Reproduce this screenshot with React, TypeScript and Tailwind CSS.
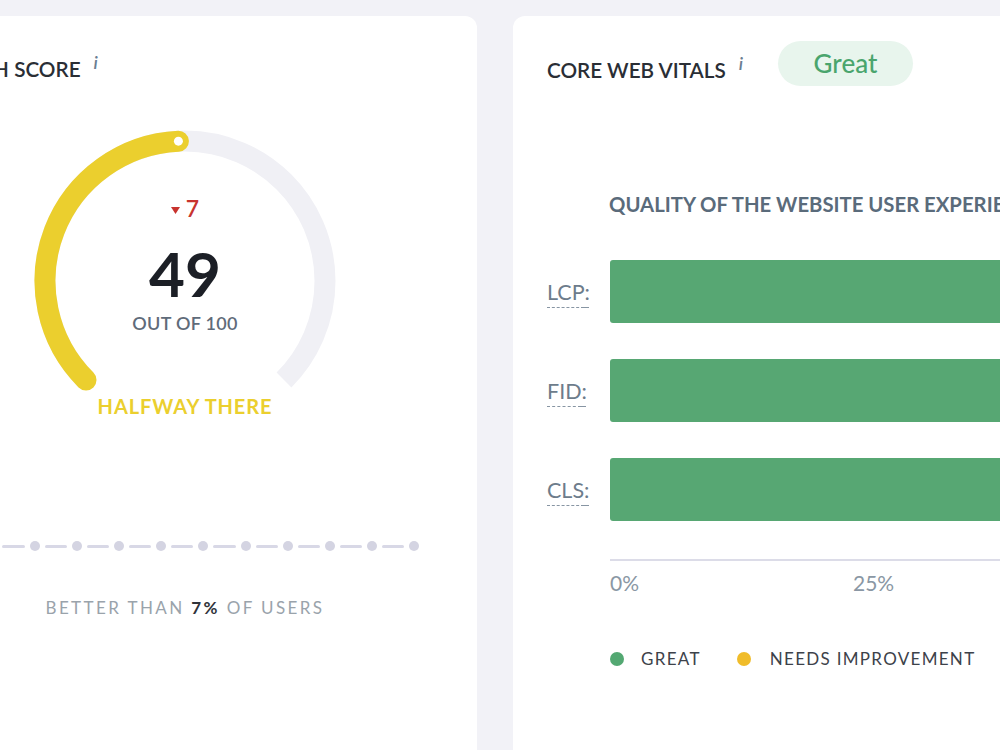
import type { ReactNode } from 'react'

const FONT = { fontFamily: 'Lato, "Open Sans", sans-serif' }

// Gauge geometry: 270° sweep, starting at the lower left.
const CX = 160
const CY = 160
const R = 140

function point(deg: number) {
  const rad = (deg * Math.PI) / 180
  return { x: CX + R * Math.sin(rad), y: CY - R * Math.cos(rad) }
}

function arcPath(from: number, to: number) {
  const a = point(from)
  const b = point(to)
  const large = to - from > 180 ? 1 : 0
  return `M ${a.x} ${a.y} A ${R} ${R} 0 ${large} 1 ${b.x} ${b.y}`
}

function InfoMark() {
  return (
    <span className="relative -top-[7px] ml-[13px] text-[18px] italic font-semibold text-[#6a7e92]">i</span>
  )
}

function CardTitle({ children }: { children: ReactNode }) {
  return (
    <div className="flex items-center text-[20.7px] leading-[26px] font-semibold text-[#2a2e35]">
      {children}
      <InfoMark />
    </div>
  )
}

function ScoreGauge({ score }: { score: number }) {
  const end = -135 + (score / 100) * 270
  const tip = point(end)
  return (
    <div className="relative mx-auto h-[320px] w-[320px]">
      <svg className="absolute inset-0" width="320" height="320" viewBox="0 0 320 320">
        <path d={arcPath(-135, 135)} fill="none" stroke="#f0f0f5" strokeWidth="21" />
        <path d={arcPath(-135, end)} fill="none" stroke="#ebcf2e" strokeWidth="21" strokeLinecap="round" />
        <circle cx={tip.x} cy={tip.y} r="4.5" fill="#ffffff" />
      </svg>
      <div className="absolute left-0 right-0 top-[73px] flex h-[28px] items-center justify-center gap-[6px] text-[23px] font-semibold text-[#c8332e]">
        <svg width="9" height="7" viewBox="0 0 9 7" className="mt-[4px]">
          <path d="M0 0h9L4.5 7z" fill="#c8332e" />
        </svg>
        7
      </div>
      <div className="absolute left-0 right-0 top-[121px] text-center text-[62px] leading-[62px] font-bold text-[#1c1f26]">
        {score}
      </div>
      <div className="absolute left-0 right-0 top-[190px] text-center text-[18px] leading-[24px] font-semibold tracking-[0.3px] text-[#5f6b7a]">
        OUT OF 100
      </div>
      <div className="absolute left-0 right-0 top-[272px] text-center text-[20px] leading-[26px] font-bold tracking-[0.9px] text-[#ebcf2e]">
        HALFWAY THERE
      </div>
    </div>
  )
}

function ProgressTrack() {
  const steps = Array.from({ length: 12 })
  return (
    <div className="ml-[25px] flex items-center gap-[5px]">
      {steps.map((_, i) => (
        <div key={i} className="flex items-center gap-[5px]">
          <div className="h-[3px] w-[22.2px] rounded-full bg-[#d8d8e6]" />
          <div className="h-[10px] w-[10px] rounded-full bg-[#d4d4e2]" />
        </div>
      ))}
    </div>
  )
}

const vitals = ['LCP', 'FID', 'CLS']

function VitalsChart() {
  return (
    <div className="flex flex-col">
      <div className="flex flex-col gap-[36px]">
        {vitals.map((name) => (
          <div key={name} className="flex items-center">
            <div className="w-[63px] text-[21.5px] leading-[28px] text-[#6d7c8b] underline decoration-dashed decoration-[#8795a3] decoration-1 underline-offset-[7px]">
              {name}:
            </div>
            <div className="h-[63px] flex-1 rounded-[3px] bg-[#57a773]" />
          </div>
        ))}
      </div>
      <div className="ml-[63px] mt-[38px] h-[2px] bg-[#dcdce8]" />
      <div className="ml-[63px] mt-[9px] flex text-[21px] leading-[26px] text-[#8a97a4]">
        <span className="w-[243px]">0%</span>
        <span>25%</span>
      </div>
    </div>
  )
}

function Legend() {
  return (
    <div className="ml-[63px] flex items-center text-[17px] leading-[24px] tracking-[1.3px] text-[#3d424a]">
      <span className="h-[14px] w-[14px] rounded-full bg-[#53a872]" />
      <span className="ml-[17px]">GREAT</span>
      <span className="ml-[36px] h-[14px] w-[14px] rounded-full bg-[#f0bc2a]" />
      <span className="ml-[19px]">NEEDS IMPROVEMENT</span>
    </div>
  )
}

export default function App() {
  return (
    <div className="flex h-[750px] w-[1000px] gap-[36px] overflow-hidden bg-[#f2f2f7] pt-[16px]" style={FONT}>
      <section className="ml-[-107px] min-h-[760px] w-[584px] shrink-0 rounded-[12px] bg-white">
        <div className="pl-[37px] pt-[40px]">
          <CardTitle>HEALTH SCORE</CardTitle>
        </div>
        <div className="mt-[39px]">
          <ScoreGauge score={49} />
        </div>
        <div className="mt-[100px]">
          <ProgressTrack />
        </div>
        <p className="mt-[45px] text-center text-[17px] leading-[24px] tracking-[2.4px] text-[#9aa3ab]">
          BETTER THAN <b className="font-bold text-[#2f333a]">7%</b> OF USERS
        </p>
      </section>

      <section className="min-h-[760px] w-[720px] shrink-0 rounded-[12px] bg-white pl-[34px]">
        <div className="flex items-center pt-[25px]">
          <div className="translate-y-[6px]">
            <CardTitle>CORE WEB VITALS</CardTitle>
          </div>
          <span className="ml-[35px] flex h-[45px] w-[135px] items-center justify-center rounded-full bg-[#e8f5ed] text-[26px] font-medium text-[#4aa56d]">
            Great
          </span>
        </div>
        <h3 className="ml-[62px] mt-[106px] text-[20.3px] leading-[24px] font-bold text-[#5a6b7b] whitespace-nowrap">
          QUALITY OF THE WEBSITE USER EXPERIENCE
        </h3>
        <div className="mt-[44px]">
          <VitalsChart />
        </div>
        <div className="mt-[51px]">
          <Legend />
        </div>
      </section>
    </div>
  )
}
